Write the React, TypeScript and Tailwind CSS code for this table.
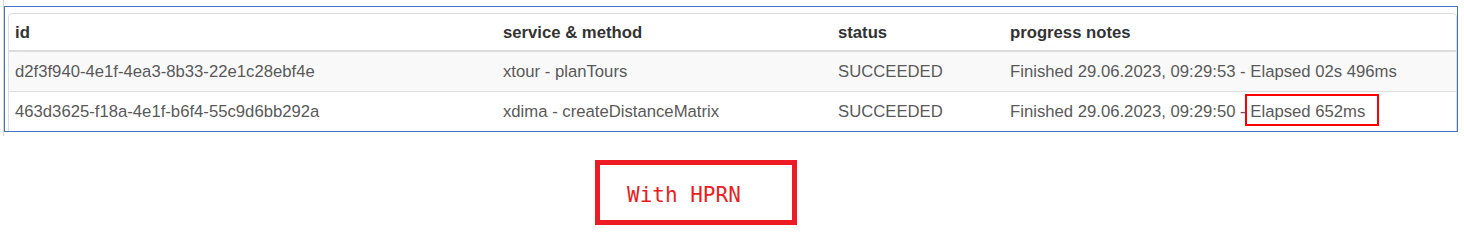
const rows = [
  {
    id: 'd2f3f940-4e1f-4ea3-8b33-22e1c28ebf4e',
    service: 'xtour - planTours',
    status: 'SUCCEEDED',
    finished: 'Finished 29.06.2023, 09:29:53 - ',
    elapsed: 'Elapsed 02s 496ms',
    marked: false,
  },
  {
    id: '463d3625-f18a-4e1f-b6f4-55c9d6bb292a',
    service: 'xdima - createDistanceMatrix',
    status: 'SUCCEEDED',
    finished: 'Finished 29.06.2023, 09:29:50 - ',
    elapsed: 'Elapsed 652ms',
    marked: true,
  },
];

export default function App() {
  return (
    <div className="w-[1464px] h-[251px] bg-white overflow-hidden font-['Liberation_Sans',Arial,sans-serif]">
      {/* snipped table */}
      <div className="ml-[3px] h-[136px] border-l border-[#d6d6d6] pt-[6px]">
        <div className="w-[1454px] h-[126px] border border-[#4472c4] overflow-hidden pl-[3px] pt-[6px]">
          <div className="w-[1449px] border border-[#dddddd] rounded-t-[4px] overflow-hidden">
            <table className="w-full table-fixed border-collapse text-[16.7px] leading-[19px]">
              <colgroup>
                <col className="w-[487px]" />
                <col className="w-[335px]" />
                <col className="w-[172px]" />
                <col />
              </colgroup>
              <thead>
                <tr className="h-[37px] border-b-2 border-[#dddddd] text-left text-[#333333]">
                  <th className="pl-[6px] font-bold">id</th>
                  <th className="pl-[7px] font-bold">service &amp; method</th>
                  <th className="pl-[7px] font-bold">status</th>
                  <th className="pl-[7px] font-bold">progress notes</th>
                </tr>
              </thead>
              <tbody className="text-[#595959]">
                {rows.map((r, i) => (
                  <tr
                    key={r.id}
                    className={`h-[40px] border-b border-[#dddddd] ${i % 2 === 0 ? 'bg-[#f9f9f9]' : 'bg-white'}`}
                  >
                    <td className="pl-[6px]">{r.id}</td>
                    <td className="pl-[7px]">{r.service}</td>
                    <td className="pl-[7px]">{r.status}</td>
                    <td className="pl-[7px] whitespace-nowrap">
                      {r.finished}
                      {r.marked ? (
                        <span className="relative inline-block">
                          {r.elapsed}
                          <span className="absolute -left-[5px] -right-[14px] -top-[8px] -bottom-[5px] border-2 border-[#ff0000]" />
                        </span>
                      ) : (
                        r.elapsed
                      )}
                    </td>
                  </tr>
                ))}
              </tbody>
            </table>
          </div>
        </div>
      </div>

      {/* annotation */}
      <div className="ml-[595px] mt-[24px] w-[202px] h-[65px] border-[5px] border-[#ed1c24] flex items-center pl-[27px] pt-[6px]">
        <span className="font-['DejaVu_Sans_Mono',monospace] text-[21px] text-[#ed1c24]">With HPRN</span>
      </div>
    </div>
  );
}
